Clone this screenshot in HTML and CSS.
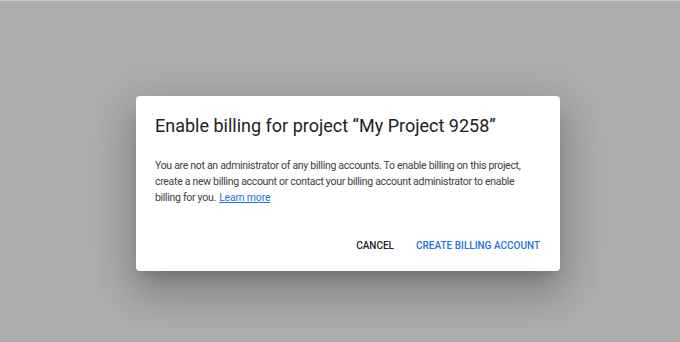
FILE: index.html
```html
<!DOCTYPE html>
<html>
<head>
<meta charset="utf-8">
<link rel="stylesheet" href="styles.css">
</head>
<body>
<div class="overlay">
  <div class="dialog">
    <h1 class="title">Enable billing for project “My Project 9258”</h1>
    <p class="text">You are not an administrator of any billing accounts. To enable billing on this project, create a new billing account or contact your billing account administrator to enable billing for you. <a class="link" href="#">Learn more</a></p>
    <div class="actions">
      <button class="btn btn-cancel">CANCEL</button>
      <button class="btn btn-primary">CREATE BILLING ACCOUNT</button>
    </div>
  </div>
</div>
</body>
</html>
```

FILE: styles.css
```css
html, body {
  margin: 0;
  padding: 0;
  height: 100%;
}
body {
  background: #adadad;
  font-family: Roboto, "Liberation Sans", sans-serif;
}
.overlay {
  height: 100%;
  box-sizing: border-box;
  border-top: 1px solid #c9c9c9;
  padding: 95px 0 0 136px;
}
.dialog {
  width: 424px;
  height: 175px;
  box-sizing: border-box;
  background: #fff;
  border-radius: 4px;
  box-shadow: 0 11px 15px -7px rgba(0,0,0,.2), 0 24px 38px 3px rgba(0,0,0,.14), 0 9px 46px 8px rgba(0,0,0,.12);
  padding: 18px 20px 0 19px;
  display: flex;
  flex-direction: column;
}
.title {
  margin: 0;
  font-size: 18px;
  font-weight: 400;
  line-height: 24px;
  color: #202124;
}
.text {
  margin: 20px 0 0;
  font-size: 10.5px;
  letter-spacing: -0.3px;
  line-height: 16px;
  color: #3c4043;
}
.link {
  color: #1a73e8;
  margin-left: 1px;
  letter-spacing: -0.2px;
}
.actions {
  display: flex;
  justify-content: flex-end;
  gap: 6px;
  margin-top: 26px;
}
.btn {
  background: none;
  border: none;
  font-family: Roboto, "Liberation Sans", sans-serif;
  font-size: 10px;
  font-weight: 500;
  padding: 6px 8px;
  line-height: 16px;
  cursor: pointer;
}
.btn-cancel {
  color: #202124;
}
.btn-primary {
  color: #1a73e8;
  margin-right: -8px;
}
```
